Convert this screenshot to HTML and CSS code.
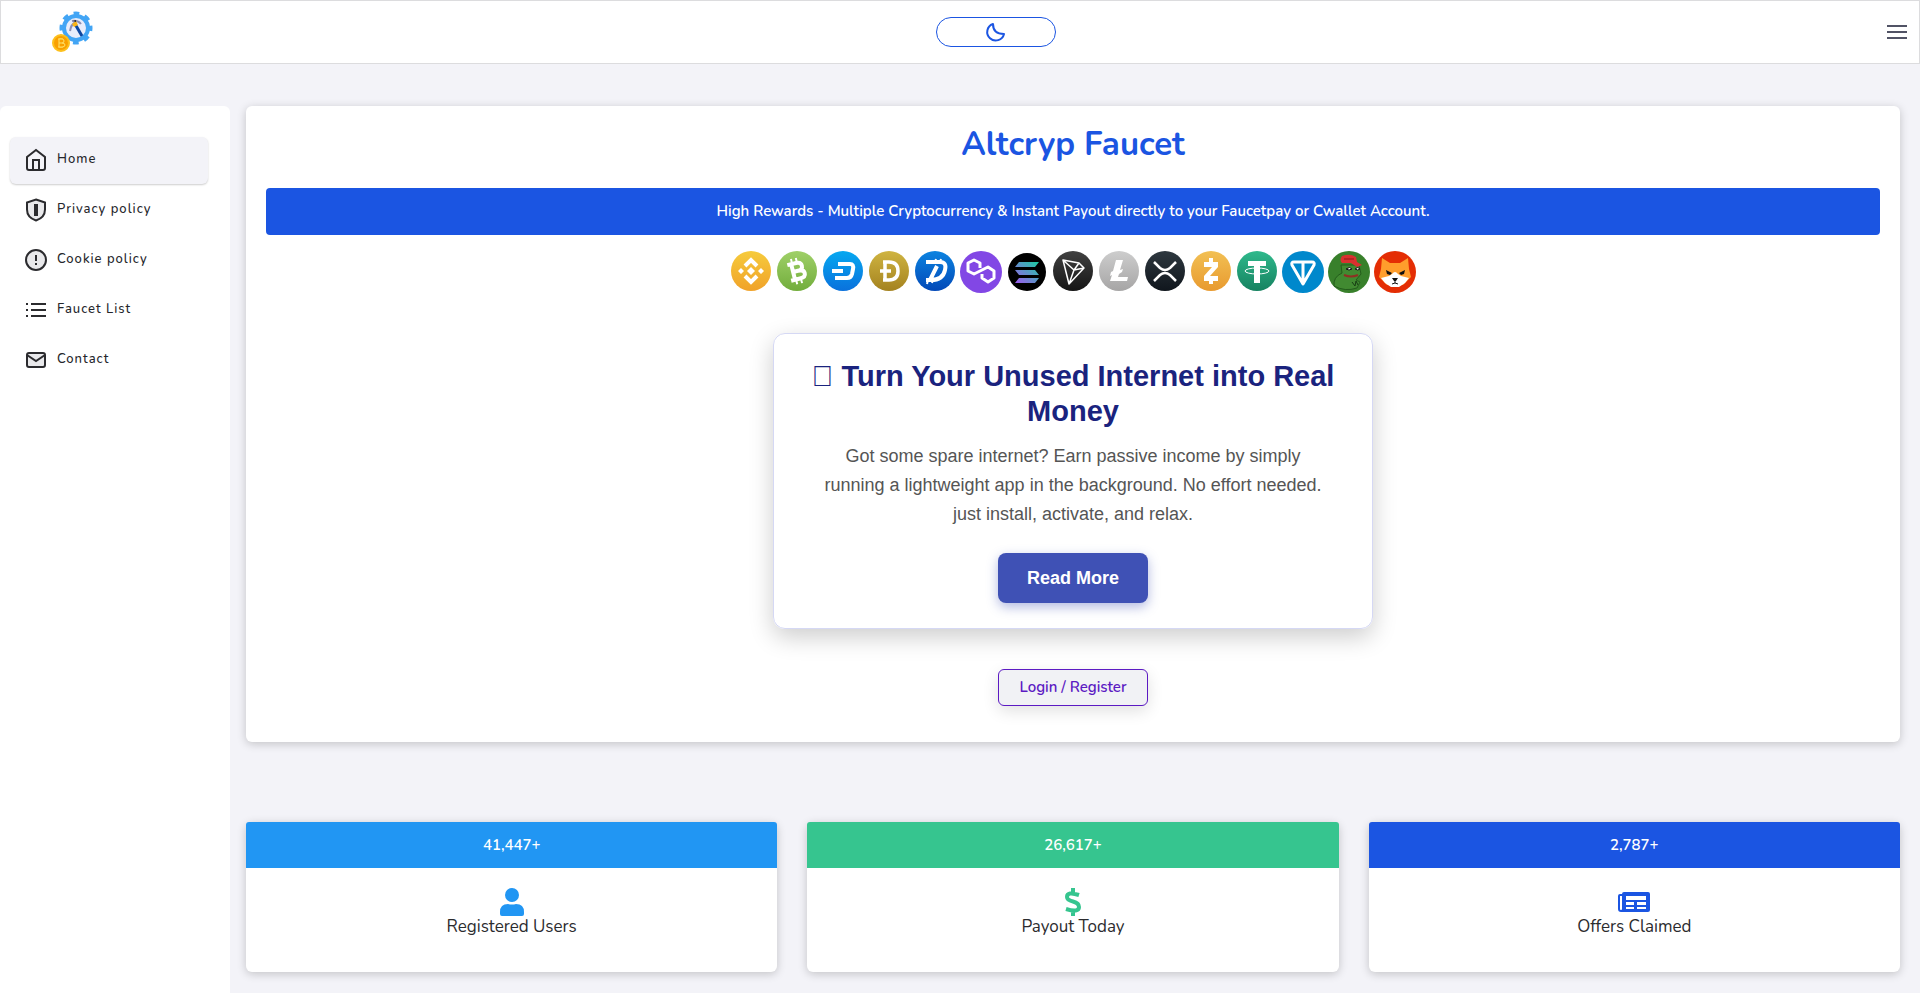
FILE: index.html
```
<!DOCTYPE html>
<html lang="en">

<head>
    <meta charset="UTF-8">
    <meta name="viewport" content="width=device-width, initial-scale=1.0">
    <title>Altcryp Faucet</title>
    <link rel="stylesheet" href="styles.css">
</head>

<body>

    <header class="topbar">
        <a href="#" class="logo" aria-label="Altcryp">
            <svg width="42" height="42" viewBox="0 0 42 42">
                <circle cx="24" cy="17" r="12" fill="#e8edfb" stroke="#42a5f5" stroke-width="4" />
                <circle cx="24" cy="17" r="14.500" fill="none" stroke="#42a5f5" stroke-width="4" stroke-dasharray="5.690 5.690" stroke-dashoffset="2.800" />
                <path d="M23 13l7 12" stroke="#0d47a1" stroke-width="3" />
                <path d="M18 20q1-7 6-9 M20 10q6-1 9 3" stroke="#8c8fb5" stroke-width="2" fill="none" />
                <path d="M20 13l4-3 2 4-4 2z" fill="#fbb416" />
                <path d="M21 10l3-1v2z" fill="#222" />
                <circle cx="9" cy="32" r="8" fill="#f9a000" stroke="#fdc01c" stroke-width="2" />
                <path d="M7 28v8 M6 28h4q2 0 2 2t-2 2h-3 M10 32q3 0 3 2t-3 2h-4 M8 27v1 M10 27v1 M8 36v1 M10 36v1" stroke="#ffe36b" fill="none" />
            </svg>
        </a>
        <button class="theme-toggle" type="button" aria-label="Dark mode">
            <svg width="24" height="24" viewBox="0 0 24 24" fill="none" stroke="#1b55e2" stroke-width="2" stroke-linejoin="round">
                <path d="M20 14A8.500 8.500 0 1 1 9 4Q9 14 20 14z" />
            </svg>
        </button>
        <button class="menu-toggle" type="button" aria-label="Menu">
            <svg width="24" height="24" viewBox="0 0 24 24" stroke="#515365" stroke-width="2">
                <path d="M2 6h20M2 12h20M2 18h20" />
            </svg>
        </button>
    </header>

    <div class="container">
        <nav class="sidebar">
            <ul>
                <li><a href="#" class="active">
                    <svg viewBox="0 0 24 24"><path d="M3 9l9-7 9 7v11a2 2 0 0 1-2 2H5a2 2 0 0 1-2-2z" /><path d="M9 22V12h6v10" /></svg>
                    <span>Home</span></a></li>
                <li><a href="#">
                    <svg viewBox="0 0 24 24"><path class="tint" d="M12 1.500l9 3v7q0 8-9 11-9-3-9-11v-7z" /><path d="M12 6v12" stroke-width="4" /></svg>
                    <span>Privacy policy</span></a></li>
                <li><a href="#">
                    <svg viewBox="0 0 24 24"><circle class="tint" cx="12" cy="12" r="10" /><path d="M12 7v6M12 15v2" /></svg>
                    <span>Cookie policy</span></a></li>
                <li><a href="#">
                    <svg viewBox="0 0 24 24"><path d="M7 6h15M7 12h15M7 18h15M2 6h2M2 12h2M2 18h2" /></svg>
                    <span>Faucet List</span></a></li>
                <li><a href="#">
                    <svg viewBox="0 0 24 24"><rect class="tint" x="3" y="5" width="18" height="14" rx="2" /><path d="M3 7l9 6 9-6" /></svg>
                    <span>Contact</span></a></li>
            </ul>
        </nav>

        <main class="content">
            <section class="hero">
                <h1>Altcryp Faucet</h1>
                <div class="banner">High Rewards - Multiple Cryptocurrency &amp; Instant Payout directly to your Faucetpay or Cwallet Account.</div>

                <div class="coins">
                    <svg viewBox="0 0 46 44">
                        <defs>
                            <linearGradient id="bnb" x2="0" y2="1"><stop stop-color="#f6cb3c" /><stop offset="1" stop-color="#f0a229" /></linearGradient>
                            <linearGradient id="bch" x2="0" y2="1"><stop stop-color="#9fd068" /><stop offset="1" stop-color="#72ad3c" /></linearGradient>
                            <linearGradient id="dash" x2="0" y2="1"><stop stop-color="#06a8f0" /><stop offset="1" stop-color="#0a71dc" /></linearGradient>
                            <linearGradient id="doge" x2="0" y2="1"><stop stop-color="#cfb441" /><stop offset="1" stop-color="#a4821f" /></linearGradient>
                            <linearGradient id="dgb" x2="0" y2="1"><stop stop-color="#0b83e0" /><stop offset="1" stop-color="#0349b8" /></linearGradient>
                            <linearGradient id="sol" x1="0" y1="1" x2="1" y2="0"><stop stop-color="#a05af0" /><stop offset="1" stop-color="#19cda0" /></linearGradient>
                            <linearGradient id="trx" x2="0" y2="1"><stop stop-color="#414141" /><stop offset="1" stop-color="#151515" /></linearGradient>
                            <linearGradient id="ltc" x2="0" y2="1"><stop stop-color="#cdcdcd" /><stop offset="1" stop-color="#a6a5a5" /></linearGradient>
                            <linearGradient id="xrp" x2="0" y2="1"><stop stop-color="#2e383f" /><stop offset="1" stop-color="#10161d" /></linearGradient>
                            <linearGradient id="zec" x2="0" y2="1"><stop stop-color="#f2c054" /><stop offset="1" stop-color="#e89a2f" /></linearGradient>
                            <linearGradient id="usdt" x2="0" y2="1"><stop stop-color="#2fb98c" /><stop offset="1" stop-color="#168260" /></linearGradient>
                        </defs>
                        <circle cx="23" cy="20" r="20" fill="url(#bnb)" />
                        <path d="M17 15l6-6 6 6M17 25l6 6 6-6" stroke="#fff" stroke-width="4" fill="none" />
                        <path d="M23 16l4 4-4 4-4-4zM13 17l3 3-3 3-3-3zM33 17l3 3-3 3-3-3z" fill="#fff" />
                    </svg>
                    <svg viewBox="0 0 46 44">
                        <circle cx="23" cy="20" r="20" fill="url(#bch)" />
                        <g transform="rotate(-14 23 20)" stroke="#fff" fill="none" stroke-width="3">
                            <path d="M19 12v16M15 12h9q5 0 5 4t-5 4h-5M24 20q6 0 6 4t-6 4h-9" stroke-width="4" />
                            <path d="M20 7v5M25 7v5M20 28v5M25 28v5" stroke-width="2" />
                        </g>
                    </svg>
                    <svg viewBox="0 0 46 44">
                        <circle cx="23" cy="20" r="20" fill="url(#dash)" />
                        <path d="M18 13h12q4 0 3 5l-1 5q-1 4-5 4H15M12 20h11" stroke="#fff" stroke-width="4" fill="none" />
                    </svg>
                    <svg viewBox="0 0 46 44">
                        <circle cx="23" cy="20" r="20" fill="url(#doge)" />
                        <path d="M17 11h6q9 0 9 9t-9 9h-6M19 10v19M14 20h11" stroke="#fff" stroke-width="3.500" fill="none" />
                    </svg>
                    <svg viewBox="0 0 46 44">
                        <circle cx="23" cy="20" r="20" fill="url(#dgb)" />
                        <path d="M14 11h14q7 0 5 8-2 10-14 10h-5M25 15l-7 14" stroke="#fff" stroke-width="4" fill="none" />
                        <path d="M24 8l-1 3M29 8l-1 3M16 29l-1 4M21 29l-1 3" stroke="#fff" stroke-width="2" />
                    </svg>
                    <svg viewBox="0 0 46 44">
                        <circle cx="23" cy="21" r="21" fill="#8247e5" />
                        <path d="M22 17v-5l-6-3-6 3v8l6 3 14-7 6 4v7l-6 4-6-4v-4" stroke="#fff" stroke-width="3" fill="none" stroke-linejoin="round" />
                    </svg>
                    <svg viewBox="0 0 46 44">
                        <circle cx="23" cy="21" r="19" />
                        <path d="M15 11h20l-4 5H11zM11 19h20l4 5H15zM15 27h20l-4 5H11z" fill="url(#sol)" />
                    </svg>
                    <svg viewBox="0 0 46 44">
                        <circle cx="23" cy="20" r="20" fill="url(#trx)" />
                        <path d="M13 9l16 3 5 5-15 16zM13 9l11 10 10-2M29 12l-5 7-5 14" stroke="#fff" stroke-width="1.500" fill="none" stroke-linejoin="round" />
                    </svg>
                    <svg viewBox="0 0 46 44">
                        <circle cx="23" cy="20" r="20" fill="url(#ltc)" />
                        <path d="M20 9h7l-3 10 3-1-1 3-3 2-1 3h10l-1 4H14l2-6-2 1 1-4 2-1z" fill="#fff" />
                    </svg>
                    <svg viewBox="0 0 46 44">
                        <circle cx="23" cy="20" r="20" fill="url(#xrp)" />
                        <path d="M12 11l6 6q5 4 10 0l6-6M12 30l6-6q5-4 10 0l6 6" stroke="#fff" stroke-width="2.500" fill="none" />
                    </svg>
                    <svg viewBox="0 0 46 44">
                        <circle cx="23" cy="20" r="20" fill="url(#zec)" />
                        <path d="M16 11h14v5l-8 9h8v5H16v-5l8-9h-8zM21 7h4v5h-4zM21 29h4v4h-4z" fill="#fff" />
                    </svg>
                    <svg viewBox="0 0 46 44">
                        <circle cx="23" cy="20" r="20" fill="url(#usdt)" />
                        <path d="M14 10h18v5h-6v17h-6V15h-6z" fill="#fff" />
                        <ellipse cx="23" cy="20" rx="12" ry="3" fill="none" stroke="#fff" />
                    </svg>
                    <svg viewBox="0 0 46 44">
                        <circle cx="23" cy="21" r="21" fill="#0088cc" />
                        <path d="M14 11h18q3 0 2 3L23 33 12 14q-1-3 2-3zM23 11v21" stroke="#fff" stroke-width="3" fill="none" stroke-linejoin="round" />
                    </svg>
                    <svg viewBox="0 0 46 44">
                        <circle cx="23" cy="21" r="21" fill="#38802b" />
                        <path d="M8 35q-1-9 8-13l-1-8h18l2 9-5 6 4 2-3 6q-12 4-23-2z" fill="#418a31" stroke="#245c1c" />
                        <path d="M16 5q8-3 14 1l1 5 5 3-5 2-6-4H16q-3-3 0-7z" fill="#d9302f" />
                        <path d="M18 8h10" stroke="#8d191b" />
                        <path d="M20 18q4-3 6 0-3 2-6 0zM29 18q3-3 5 0-2 2-5 0z" fill="#fff" stroke="#111" />
                        <path d="M18 24q7 3 14 0" stroke="#8f3023" stroke-width="2" fill="none" />
                        <path d="M26 31l3 4 1-5 2 4" stroke="#173d14" fill="none" />
                    </svg>
                    <svg viewBox="0 0 46 44">
                        <circle cx="23" cy="21" r="21" fill="#e42d04" />
                        <path d="M10 7l8 5h10l8-5 1 11 2 8-8 8H15l-8-8 2-8z" fill="#ff9e2c" />
                        <path d="M9 27l8-2 3-2q3-4 6 0l3 2 8 2-4 5-6 4h-8l-6-4z" fill="#fff" />
                        <path d="M14 19l6 3-2 2-3-1zM33 19l-6 3 2 2 3-1zM20 27h6l-2 3h-2z" fill="#111" />
                        <path d="M23 29v3M20 33q3-2 6 0" stroke="#111" fill="none" />
                    </svg>
                </div>

                <div class="promo">
                    <h2>&#xE000; Turn Your Unused Internet into Real Money</h2>
                    <p>Got some spare internet? Earn passive income by simply running a lightweight app in the background. No effort needed. just install, activate, and relax.</p>
                    <a href="#" class="read-more">Read More</a>
                </div>

                <a href="#" class="login">Login / Register</a>
            </section>

            <section class="stats">
                <div class="stat users">
                    <div class="stat-head">41,447+</div>
                    <div class="stat-body">
                        <svg width="32" height="28" viewBox="0 0 32 28" fill="#2196f3"><circle cx="16" cy="7" r="7" /><path d="M12 16q4 1 8 0 8 0 8 8v2q0 2-2 2H6q-2 0-2-2v-2q0-8 8-8z" /></svg>
                        <span>Registered Users</span>
                    </div>
                </div>
                <div class="stat payout">
                    <div class="stat-head">26,617+</div>
                    <div class="stat-body">
                        <svg width="32" height="28" viewBox="0 0 32 28" fill="none" stroke="#36c58f" stroke-width="4"><path d="M22 7Q10 3 10 9q0 3 6 4.500 6 1.500 6 5.500 0 6-13 2M16 0v6M16 22v6" /></svg>
                        <span>Payout Today</span>
                    </div>
                </div>
                <div class="stat offers">
                    <div class="stat-head">2,787+</div>
                    <div class="stat-body">
                        <svg width="32" height="28" viewBox="0 0 32 28"><path fill="#1b55e2" fill-rule="evenodd" d="M6 4h24q2 0 2 2v16q0 2-2 2H3q-3 0-3-3V8q0-2 2-2h2q0-2 2-2zM2 8v13q0 1 1 1t1-1V8zM8 8v4h20V8zM8 14v3h8v-3zM19 14v3h9v-3zM8 19v2h8v-2zM19 19v2h9v-2z" /></svg>
                        <span>Offers Claimed</span>
                    </div>
                </div>
            </section>
        </main>
    </div>

</body>

</html>
```
FILE: styles.css
```
* {
    box-sizing: border-box;
}

body {
    margin: 0;
    min-height: 100vh;
    display: flex;
    flex-direction: column;
    background: #f3f3f8;
    color: #3b3f5c;
    font-family: "Nunito", "Lato", sans-serif;
    font-size: 15px;
}

a {
    text-decoration: none;
}

.topbar {
    display: flex;
    align-items: center;
    justify-content: space-between;
    height: 64px;
    padding: 0 10px 0 51px;
    background: #fff;
    border: 1px solid #dcdcde;
}

.logo {
    display: flex;
    padding-right: 12px;
}

.theme-toggle {
    display: flex;
    align-items: center;
    justify-content: center;
    width: 120px;
    height: 30px;
    padding: 0;
    background: #fff;
    border: 1px solid #1b55e2;
    border-radius: 15px;
}

.menu-toggle {
    display: flex;
    padding: 0;
    background: none;
    border: 0;
}

.container {
    flex: 1;
    display: flex;
    gap: 16px;
    padding: 42px 20px 0 0;
}

.sidebar {
    flex: 0 0 230px;
    padding: 31px 22px 0 10px;
    background: #fff;
    border-radius: 6px 6px 0 0;
}

.sidebar ul {
    margin: 0;
    padding: 0;
    list-style: none;
    display: grid;
    gap: 3px;
}

.sidebar a {
    display: flex;
    gap: 9px;
    height: 47px;
    padding: 11px 14px;
    border-radius: 6px;
    color: #25262b;
    font-size: 13px;
    font-weight: 500;
    letter-spacing: 1px;
}

.sidebar a.active {
    background: #f3f3f8;
    box-shadow: 0 1px 2px rgba(0, 0, 0, 0.2);
}

.sidebar svg {
    width: 24px;
    height: 24px;
    fill: none;
    stroke: #2b2b2e;
    stroke-width: 2;
}

.sidebar .tint {
    fill: #e9e9eb;
}

.sidebar span {
    line-height: 22px;
}

.content {
    flex: 1;
    padding-bottom: 21px;
}

.hero {
    display: flex;
    flex-direction: column;
    align-items: center;
    padding: 17px 20px 36px;
    background: #fff;
    border-radius: 6px;
    box-shadow: 0 2px 10px rgba(0, 0, 0, 0.2);
}

h1 {
    margin: 0 0 21px;
    color: #1b55e2;
    font-size: 33px;
    font-weight: 700;
    line-height: 44px;
}

.banner {
    align-self: stretch;
    padding: 12px;
    background: #1b55e2;
    border-radius: 4px;
    color: #fff;
    font-weight: 600;
    line-height: 23px;
    text-align: center;
}

.coins {
    display: flex;
    margin: 16px 0 38px;
}

.coins svg {
    width: 46px;
    height: 44px;
}

.promo {
    max-width: 600px;
    padding: 25px;
    border: 1px solid #d5d8f4;
    border-radius: 12px;
    box-shadow: 0 8px 24px rgba(0, 0, 0, 0.2);
    font-family: "Liberation Sans", Arial, sans-serif;
    text-align: center;
}

.promo h2 {
    margin: 0 0 13px;
    color: #1a237e;
    font-size: 29px;
    line-height: 35px;
}

.promo p {
    margin: 0 0 24px;
    padding: 0 19px;
    color: #555;
    font-size: 18px;
    line-height: 29px;
}

.read-more {
    display: inline-block;
    padding: 14px 29px;
    background: #3f51b5;
    border-radius: 8px;
    box-shadow: 0 4px 12px rgba(63, 81, 181, 0.4);
    color: #fff;
    font-size: 18px;
    font-weight: 700;
    line-height: 22px;
}

.login {
    margin-top: 40px;
    padding: 8px 20px;
    background: #f1f2f5;
    border: 1px solid #5c1ac3;
    border-radius: 6px;
    box-shadow: 0 5px 16px rgba(0, 0, 0, 0.12);
    color: #5c1ac3;
    font-weight: 600;
    line-height: 19px;
}

.stats {
    display: grid;
    grid-template-columns: repeat(3, 1fr);
    gap: 30px;
    margin-top: 80px;
}

.stat {
    background: #fff;
    border-radius: 6px;
    box-shadow: 0 2px 10px rgba(0, 0, 0, 0.2);
    text-align: center;
}

.stat-head {
    padding: 12px;
    border-radius: 3px 3px 0 0;
    color: #fff;
    font-weight: 600;
    line-height: 22px;
}

.users .stat-head {
    background: #2196f3;
}

.payout .stat-head {
    background: #36c58f;
}

.offers .stat-head {
    background: #1b55e2;
}

.stat-body {
    display: flex;
    flex-direction: column;
    align-items: center;
    padding: 20px 20px 34px;
    color: #2b2b2e;
    font-size: 17px;
    line-height: 22px;
}
```
